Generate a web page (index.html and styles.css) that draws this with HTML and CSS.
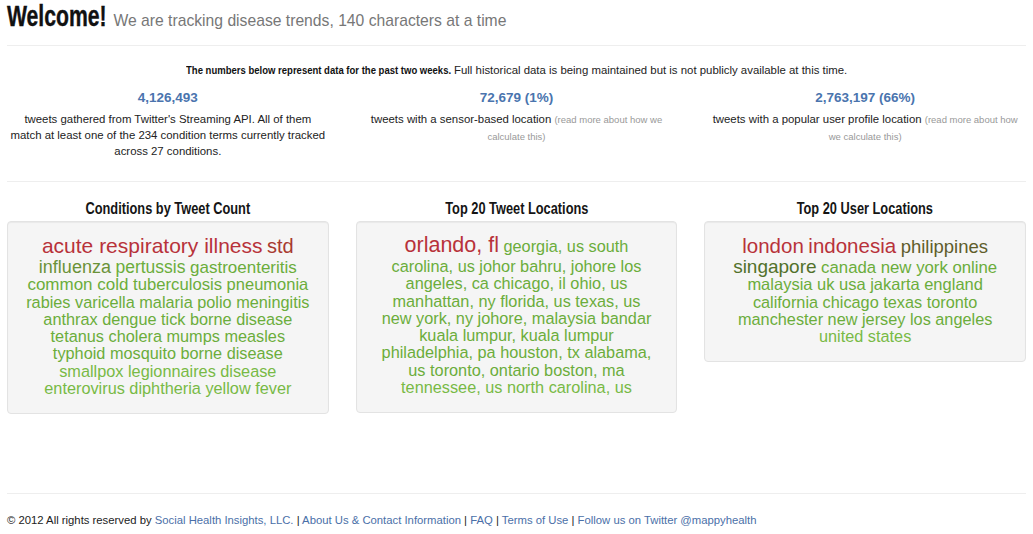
FILE: index.html
```html
<!DOCTYPE html>
<html lang="en">
<head>
<meta charset="utf-8">
<title>MappyHealth</title>
<link rel="stylesheet" href="styles.css">
</head>
<body>
<div class="container">
  <header class="page-header">
    <h1 class="title">Welcome!</h1>
    <span class="subtitle">We are tracking disease trends, 140 characters at a time</span>
  </header>

  <section class="stats-section">
    <p class="intro"><strong>The numbers below represent data for the past two weeks.</strong> Full historical data is being maintained but is not publicly available at this time.</p>
    <div class="grid">
      <div class="stat">
        <div class="stat-num">4,126,493</div>
        <p class="stat-desc">tweets gathered from Twitter's Streaming API. All of them match at least one of the 234 condition terms currently tracked across 27 conditions.</p>
      </div>
      <div class="stat">
        <div class="stat-num">72,679 (1%)</div>
        <p class="stat-desc">tweets with a sensor-based location <span class="note">(read more about how we <span class="nowrap">calculate this)</span></span></p>
      </div>
      <div class="stat">
        <div class="stat-num">2,763,197 (66%)</div>
        <p class="stat-desc">tweets with a popular user profile location <span class="note">(read more about how <span class="nowrap">we calculate this)</span></span></p>
      </div>
    </div>
  </section>

  <section class="clouds grid">
    <div class="cloud-col">
      <h2 class="cloud-title">Conditions by Tweet Count</h2>
      <div class="well cloud">
        <span class="w r1">acute respiratory illness</span> <span class="w r2">std</span><br>
        <span class="w g1 s18">influenza</span> <span class="w s175">pertussis</span> <span class="w s17">gastroenteritis</span><br>
        <span class="w s17">common cold</span> <span class="w s167">tuberculosis</span> <span class="w s165">pneumonia</span><br>
        <span class="w">rabies</span> <span class="w">varicella</span> <span class="w">malaria</span> <span class="w">polio</span> <span class="w">meningitis</span><br>
        <span class="w">anthrax</span> <span class="w">dengue</span> <span class="w">tick borne disease</span><br>
        <span class="w">tetanus</span> <span class="w">cholera</span> <span class="w">mumps</span> <span class="w">measles</span><br>
        <span class="w">typhoid</span> <span class="w">mosquito borne disease</span><br>
        <span class="w g3">smallpox</span> <span class="w g3">legionnaires disease</span><br>
        <span class="w g3">enterovirus</span> <span class="w g3">diphtheria</span> <span class="w g3">yellow fever</span>
      </div>
    </div>
    <div class="cloud-col">
      <h2 class="cloud-title">Top 20 Tweet Locations</h2>
      <div class="well cloud">
        <span class="w r1 s215">orlando, fl</span> <span class="w">georgia, us</span> <span class="w">south</span><br>
        <span class="w">carolina, us</span> <span class="w">johor bahru, johore</span> <span class="w">los</span><br>
        <span class="w">angeles, ca</span> <span class="w">chicago, il</span> <span class="w">ohio, us</span><br>
        <span class="w">manhattan, ny</span> <span class="w">florida, us</span> <span class="w">texas, us</span><br>
        <span class="w">new york, ny</span> <span class="w">johore, malaysia</span> <span class="w">bandar</span><br>
        <span class="w">kuala lumpur, kuala lumpur</span><br>
        <span class="w">philadelphia, pa</span> <span class="w">houston, tx</span> <span class="w">alabama,</span><br>
        <span class="w">us</span> <span class="w">toronto, ontario</span> <span class="w">boston, ma</span><br>
        <span class="w g3">tennessee, us</span> <span class="w g3">north carolina, us</span>
      </div>
    </div>
    <div class="cloud-col">
      <h2 class="cloud-title">Top 20 User Locations</h2>
      <div class="well cloud">
        <span class="w r1 s205">london</span> <span class="w r1 s205">indonesia</span> <span class="w o1">philippines</span><br>
        <span class="w o2">singapore</span> <span class="w s168">canada</span> <span class="w s168">new york</span> <span class="w s168">online</span><br>
        <span class="w s165">malaysia</span> <span class="w s165">uk</span> <span class="w s165">usa</span> <span class="w s165">jakarta</span> <span class="w s165">england</span><br>
        <span class="w">california</span> <span class="w">chicago</span> <span class="w">texas</span> <span class="w">toronto</span><br>
        <span class="w">manchester</span> <span class="w">new jersey</span> <span class="w">los angeles</span><br>
        <span class="w g3">united states</span>
      </div>
    </div>
  </section>

  <footer class="footer">
    <p>&copy; 2012 All rights reserved by <a href="#">Social Health Insights, LLC.</a> | <a href="#">About Us &amp; Contact Information</a> | <a href="#">FAQ</a> | <a href="#">Terms of Use</a> | <a href="#">Follow us on Twitter @mappyhealth</a></p>
  </footer>
</div>
</body>
</html>
```

FILE: styles.css
```css
* { box-sizing: border-box; }

html, body {
  margin: 0;
  padding: 0;
  background: #ffffff;
}

body {
  font-family: "Liberation Sans", Arial, sans-serif;
  color: #333333;
  font-size: 11.4px;
}

.container {
  width: 1033px;
  padding: 0 7px;
}

/* Header */
.page-header {
  display: flex;
  align-items: baseline;
  gap: 7px;
  height: 46px;
  border-bottom: 1px solid #eeeeee;
}

.title {
  margin: 0 -37px 0 0;
  font-family: "Liberation Sans", Arial, sans-serif;
  font-weight: bold;
  font-size: 29px;
  line-height: 32px;
  color: #111111;
  -webkit-text-stroke: 0.4px #111111;
  transform: scaleX(0.73);
  transform-origin: 0 50%;
}

.subtitle {
  font-size: 15.7px;
  color: #777777;
}

/* Stats */
.stats-section {
  height: 136px;
  padding-top: 16px;
  border-bottom: 1px solid #eeeeee;
}

.intro {
  margin: 0 0 10px;
  text-align: center;
  font-size: 11.4px;
  line-height: 16px;
  color: #222222;
}

.intro strong {
  display: inline-block;
  margin-right: -52px;
  color: #111111;
  transform: scaleX(0.836);
  transform-origin: 0 50%;
}

.grid {
  display: grid;
  grid-template-columns: repeat(3, 1fr);
  column-gap: 27px;
}

.stat {
  padding: 0 2px;
  text-align: center;
}

.stat-num {
  font-weight: bold;
  font-size: 13.5px;
  line-height: 20px;
  color: #4a74ae;
  margin-bottom: 3px;
}

.stat-desc {
  margin: 0;
  font-size: 11.4px;
  line-height: 16px;
  color: #222222;
}

.note {
  font-size: 9.5px;
  color: #999999;
}

.nowrap { white-space: nowrap; }

/* Clouds */
.clouds {
  align-items: start;
  padding-top: 17px;
  height: 312px;
  border-bottom: 1px solid #eeeeee;
}

.cloud-title {
  margin: 0 0 2px;
  text-align: center;
  font-family: "Liberation Sans", Arial, sans-serif;
  font-weight: bold;
  font-size: 16px;
  line-height: 20px;
  color: #151515;
  transform: scaleX(0.8);
}

.well {
  background: #f5f5f5;
  border: 1px solid #e3e3e3;
  border-radius: 4px;
  box-shadow: inset 0 1px 1px rgba(0, 0, 0, 0.05);
}

.cloud {
  padding: 11px 8px 16px;
  text-align: center;
  font-size: 16.3px;
  line-height: 17.3px;
}

.w { color: #6bad3b; }
.r1 { font-size: 21px; line-height: 25px; color: #b8323a; }
.r2 { font-size: 20px; line-height: 25px; color: #a83a30; }
.g1 { color: #6a9238; }
.g3 { color: #78ba45; }
.o1 { font-size: 18.5px; color: #5f5d2b; }
.o2 { font-size: 19px; color: #52712a; }

.s215 { font-size: 21.5px; }
.s205 { font-size: 20.5px; }
.s18 { font-size: 18px; }
.s175 { font-size: 17.5px; }
.s17 { font-size: 17px; }
.s168 { font-size: 16.8px; }
.s167 { font-size: 16.7px; }
.s165 { font-size: 16.5px; }

/* Footer */
.footer {
  padding-top: 18px;
}

.footer p {
  margin: 0;
  font-size: 11.3px;
  line-height: 16px;
  color: #222222;
}

.footer a {
  color: #4a6fa8;
  text-decoration: none;
}
```
